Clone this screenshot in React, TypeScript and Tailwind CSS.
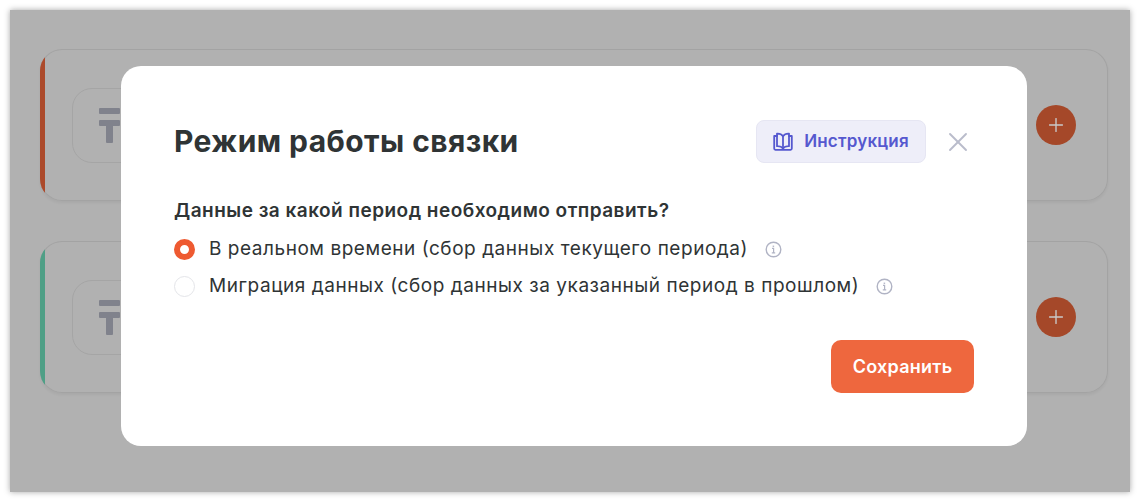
import { Plus, X } from 'lucide-react';

function TengeIcon() {
  return (
    <svg width="21" height="35" viewBox="0 0 21 35" fill="#80828c">
      <rect x="0" y="0" width="21" height="6" rx="1" />
      <rect x="0" y="12" width="21" height="6" rx="1" />
      <rect x="7" y="15" width="7" height="20" rx="1" />
    </svg>
  );
}

function BookIcon() {
  return (
    <svg width="20" height="19" viewBox="0 0 20 19" fill="none" stroke="#5558cf" strokeWidth="1.8" strokeLinejoin="round" strokeLinecap="round">
      <path d="M10 4.2C8.8 2.4 6.8 1.4 4 1.6v12.6c2.8-.2 4.8.6 6 2.2 1.2-1.6 3.2-2.4 6-2.2V1.6c-2.8-.2-4.8.8-6 2.6z" />
      <path d="M10 4.2v12.2" />
      <path d="M4 4H1.2v12.6c0 .7.5 1.2 1.2 1.2h15.2c.7 0 1.2-.5 1.2-1.2V4H16" />
    </svg>
  );
}

function InfoIcon() {
  return (
    <svg width="17" height="17" viewBox="0 0 17 17" fill="none" stroke="#b0b3c4" strokeWidth="1.4">
      <circle cx="8.5" cy="8.5" r="7.3" />
      <path d="M7 7.4h1.6v4.4M6.8 11.8h3.4" strokeWidth="1.2" />
      <path d="M8.4 4.6v1.3" strokeWidth="1.5" />
    </svg>
  );
}

function BundleCard({ bar }: { bar: string }) {
  return (
    <div className="h-[152px] rounded-[22px] overflow-hidden flex items-center shadow-[inset_0_0_0_1px_#a3a3a3,0_2px_3px_rgba(0,0,0,0.05)]">
      <div className={`w-[5px] self-stretch ${bar}`} />
      <div className="ml-[27px] w-[200px] h-[75px] rounded-[20px] border border-[#a5a5a5] flex items-center pl-[26px] shrink-0">
        <TengeIcon />
      </div>
      <div className="ml-auto mr-[32px] w-10 h-10 rounded-full bg-[#a54829] flex items-center justify-center">
        <Plus className="w-[22px] h-[22px] text-[#c9c9c9]" strokeWidth={1.5} />
      </div>
    </div>
  );
}

function RadioRow({ label, checked }: { label: string; checked?: boolean }) {
  return (
    <div className="flex items-center h-[22px]">
      {checked ? (
        <span className="w-[21px] h-[21px] rounded-full border-[6px] border-[#ee5a31] bg-white shrink-0" />
      ) : (
        <span className="w-[21px] h-[21px] rounded-full border border-[#e4e5e9] bg-white shrink-0" />
      )}
      <span className="ml-[14px] text-[19px] tracking-[0.54px] leading-[22px] text-[#2f3435]">{label}</span>
      <span className="ml-[17px] flex">
        <InfoIcon />
      </span>
    </div>
  );
}

export default function App() {
  return (
    <div className="relative w-[1140px] h-[502px] bg-white p-[10px] overflow-hidden font-['Inter',sans-serif]">
      <div className="h-[482px] w-[1120px] bg-[#b1b1b1] shadow-[0_0_6px_rgba(0,0,0,0.35)] pl-[30px] pr-[22px] pt-[39px] flex flex-col gap-[40px]">
        <BundleCard bar="bg-[#ac4a2b]" />
        <BundleCard bar="bg-[#4f9f86]" />
      </div>

      <div className="absolute left-[121px] top-[66px] w-[906px] h-[380px] bg-white rounded-[20px] px-[53px] pt-[54px]">
        <div className="flex items-center h-[43px]">
          <h1 className="text-[30px] tracking-[0.42px] leading-[43px] font-bold text-[#2f3435]">Режим работы связки</h1>
          <button className="ml-auto w-[170px] h-[43px] rounded-[8px] bg-[#eeeef9] border border-[#e6e6f3] flex items-center justify-center gap-[11px] text-[#5558cf] text-[17px] tracking-[0.2px] font-semibold">
            <BookIcon />
            Инструкция
          </button>
          <button className="ml-[22px] mr-[6px] w-5 h-5 flex items-center justify-center text-[#b9bccb]">
            <X className="w-8 h-8 shrink-0" strokeWidth={1.4} />
          </button>
        </div>
        <p className="mt-[37px] text-[19px] tracking-[0.48px] leading-[22px] font-semibold text-[#2f3435]">
          Данные за какой период необходимо отправить?
        </p>
        <div className="mt-[16px] flex flex-col gap-[15px]">
          <RadioRow label="В реальном времени (сбор данных текущего периода)" checked />
          <RadioRow label="Миграция данных (сбор данных за указанный период в прошлом)" />
        </div>
        <div className="flex justify-end mt-[43px]">
          <button className="w-[143px] h-[53px] rounded-[10px] bg-[#ee673e] text-white text-[18px] tracking-[0.25px] font-semibold">
            Сохранить
          </button>
        </div>
      </div>
    </div>
  );
}
